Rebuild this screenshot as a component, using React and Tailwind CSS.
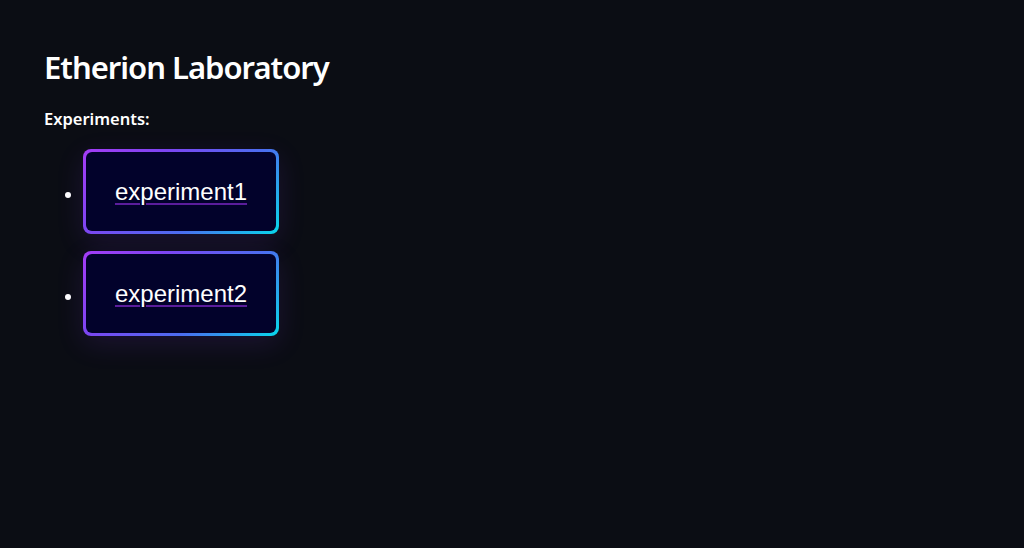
const experiments = ['experiment1', 'experiment2']

export default function App() {
  return (
    <div className="min-h-screen bg-[#0b0d14] text-white px-[44px] pt-[45px]" style={{ fontFamily: '"Noto Sans", "Open Sans", sans-serif' }}>
      <h1 className="text-[31px] leading-[44px] font-semibold tracking-[-1px]">Etherion Laboratory</h1>
      <p className="mt-[18px] text-[16.5px] leading-[24px] font-semibold">Experiments:</p>

      <ul className="list-disc pl-[39px] mt-[18px] space-y-[17px] marker:text-white">
        {experiments.map((name) => (
          <li key={name}>
            <a
              href="#"
              className="inline-block align-baseline rounded-[8px] p-[3px] bg-[linear-gradient(135deg,#a43cf6_0%,#7d45f2_30%,#4b6ef0_65%,#07d8ec_100%)] shadow-[0_8px_28px_rgba(124,58,237,0.14)]"
            >
              <span
                className="flex items-center justify-center w-[190px] h-[79px] rounded-[6px] bg-[#02022b] text-[24px] underline decoration-[#5b1d9c] decoration-2 underline-offset-[3px]"
                style={{ fontFamily: '"Liberation Sans", Arial, sans-serif' }}
              >
                {name}
              </span>
            </a>
          </li>
        ))}
      </ul>
    </div>
  )
}
